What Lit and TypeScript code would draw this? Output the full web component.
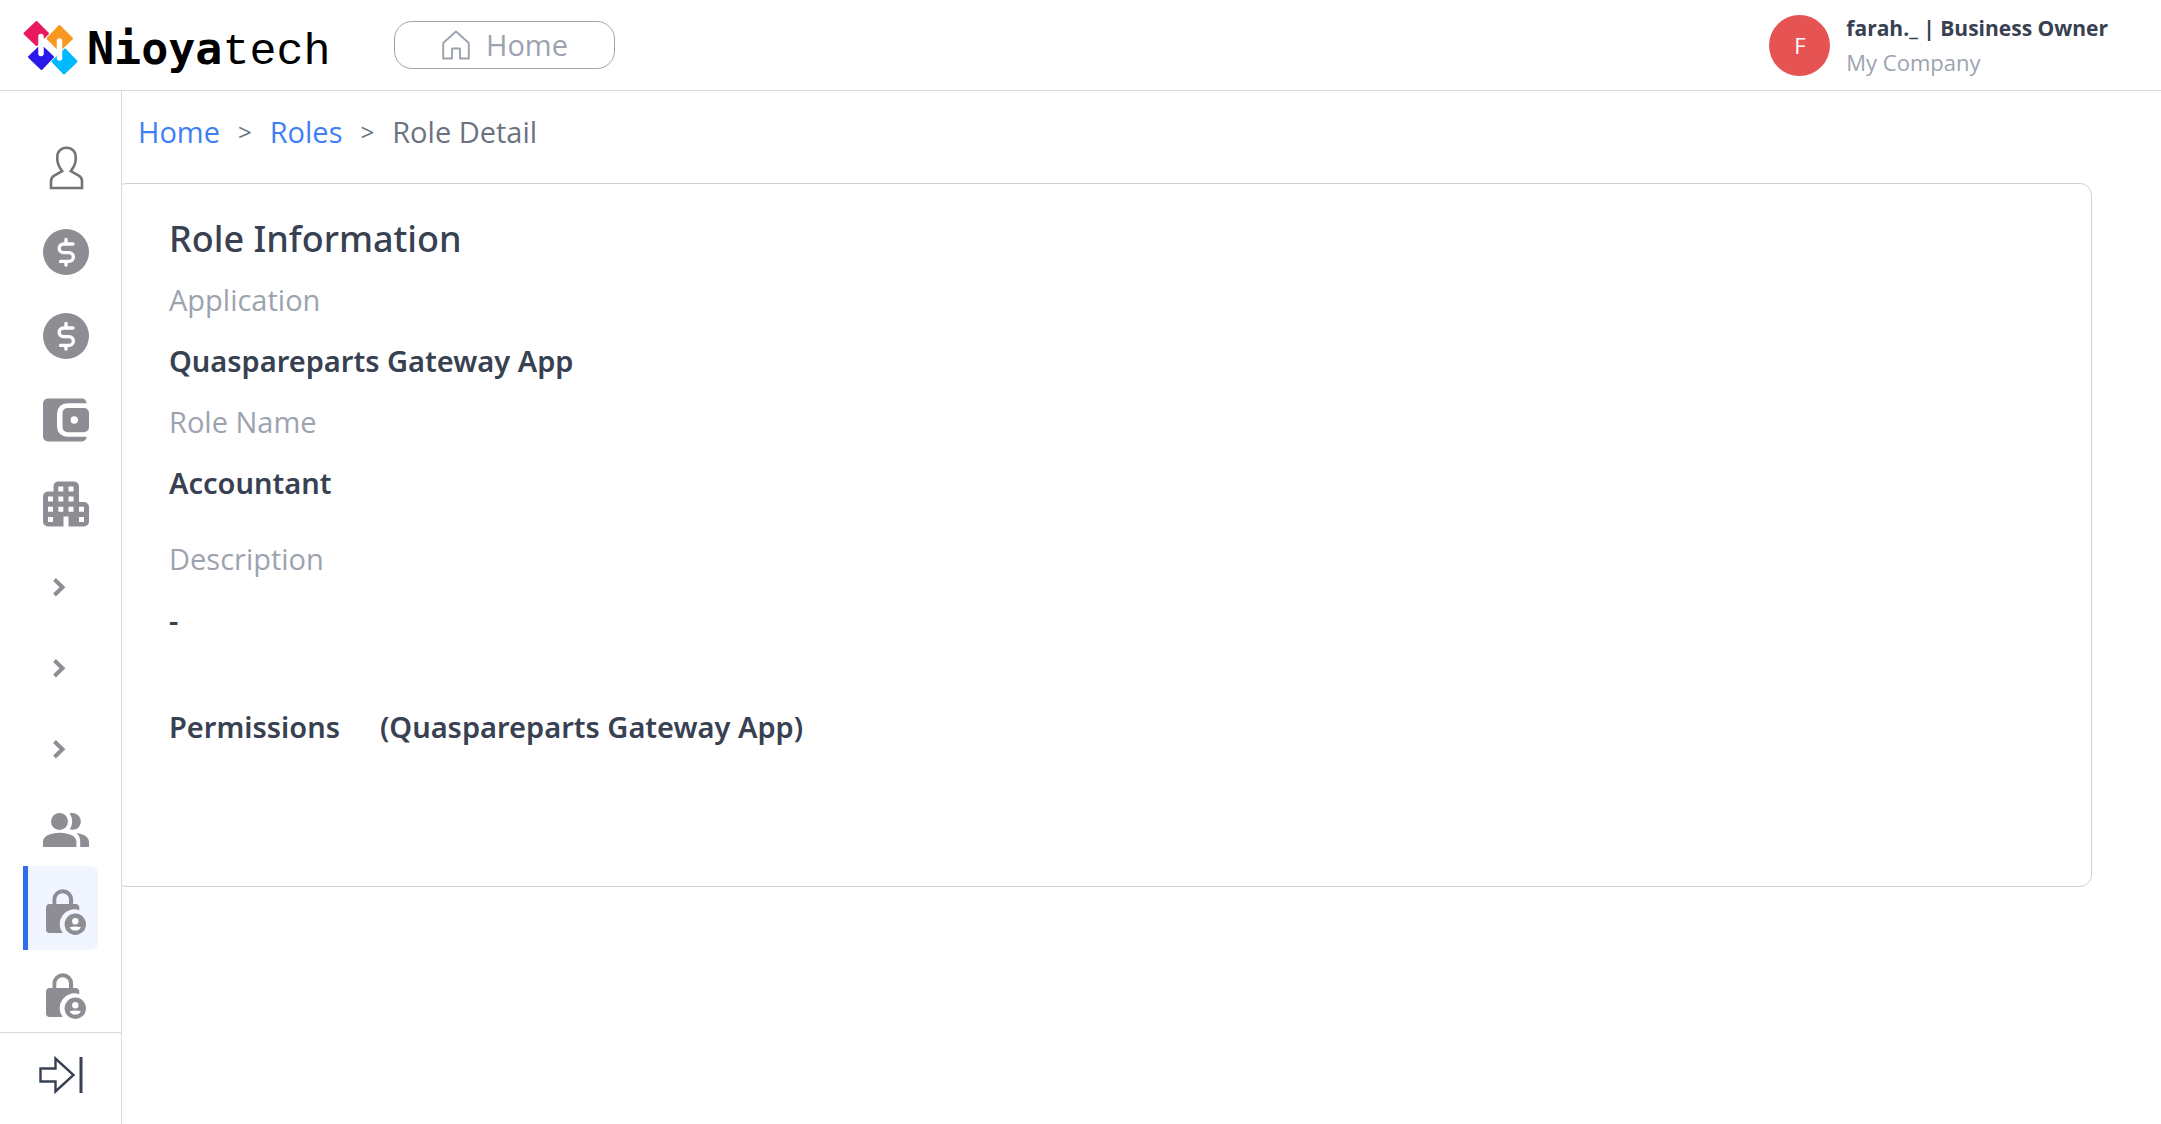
import { LitElement, html, css, svg, TemplateResult } from "lit";
import { customElement } from "lit/decorators.js";
import { classMap } from "lit/directives/class-map.js";

const dollar = svg`
  <circle cx="23" cy="23" r="23"/>
  <path d="M30 15H20.5a4.2 4.2 0 0 0 0 8.6H26a4.4 4.4 0 0 1 0 8.8H17.5M23 10.5V15M23 32.4V36" fill="none" stroke="#fff" stroke-width="3.4" stroke-linecap="round" stroke-linejoin="round"/>`;

const chevron = svg`<path d="M11.5 15.5 19.5 23.2 11.5 31" fill="none" stroke="#8e8d94" stroke-width="4"/>`;

const lock = svg`
  <path fill-rule="evenodd" d="M9.5 15v-4.500a10.200 10.200 0 0 1 20.600 0V15H32.500a3.800 3.800 0 0 1 3.800 3.800V21.200A14.700 14.700 0 0 0 19.700 44H6.800A3.800 3.800 0 0 1 3 40.200V18.800A3.800 3.800 0 0 1 6.800 15ZM13.300 15H26v-4.500a6.350 6.350 0 0 0-12.700 0Z"/>
  <circle cx="32.300" cy="35.300" r="10.700"/>
  <circle cx="32.300" cy="32.200" r="3.200" fill="#fff"/>
  <path d="M26.700 38.200q5.600-1.600 11.200 0-1.600 3.400-5.600 3.400t-5.600-3.400Z" fill="#fff"/>`;

const user = svg`
  <path d="M19.200 26.200C16.500 22.500 14.300 19 14.300 14.500v-2.600C14.300 6.500 18 2.800 23.500 2.800s9.200 3.700 9.200 9.100v2.600c0 4.500-2.200 8-4.900 11.700l7.600 4.200c2.600 1.500 3.600 3 3.600 5.600v7H8v-7c0-2.600 1-4.100 3.600-5.600Z" fill="none" stroke="#737277" stroke-width="2.600"/>`;

const wallet = svg`
  <path d="M43.500 6.200A4.500 4.500 0 0 0 39 1.500H5A5 5 0 0 0 0 6.500v33a5 5 0 0 0 5 5h34a4.500 4.500 0 0 0 4.500-4.700H24a10 10 0 0 1-10-10V16.200a10 10 0 0 1 10-10Z"/>
  <path fill-rule="evenodd" d="M24.500 11H41a5 5 0 0 1 5 5v14.200a5 5 0 0 1-5 5H24.500a5 5 0 0 1-5-5V16a5 5 0 0 1 5-5ZM31.300 19.300a3.700 3.700 0 1 0 .001 7.400 3.700 3.700 0 0 0-.001-7.400Z"/>`;

const building = svg`
  <path fill-rule="evenodd" d="M15 .5h16a5 5 0 0 1 5 5v15.500h5a5 5 0 0 1 5 5v14.500a5 5 0 0 1-5 5H25.500v-10h-5v10H5a5 5 0 0 1-5-5V15.500a5 5 0 0 1 5-5h5.500V5.500a5 5 0 0 1 4.500-5Z
    M15.300 5.500v5h5v-5ZM25.500 5.500v5h5v-5Z
    M5 15.500v5h5v-5ZM15.300 15.500v5h5v-5ZM25.500 15.500v5h5v-5Z
    M5 25.700v5h5v-5ZM15.300 25.700v5h5v-5ZM25.500 25.700v5h5v-5ZM36 25.700v5h5v-5Z
    M5 36v5h5v-5ZM36 36v5h5v-5Z"/>`;

const people = svg`
  <circle cx="16.500" cy="14.500" r="8.500"/>
  <path d="M0 40V34.500c0-5 7-8.800 16.700-8.800s16.700 3.800 16.700 8.800V40Z"/>
  <path d="M26.500 22.300c3.600-4.400 3.600-11.600 0-15.900 6-1.700 11.300 2.300 11.300 8.100s-5.300 9.600-11.300 7.800Z"/>
  <path d="M33.400 26.100C41 27 46 30.500 46 34.800V40H37.200v-5.500c0-3.300-1.200-6.200-3.800-8.400Z"/>`;

interface NavItem {
  label: string;
  icon: TemplateResult<2>;
  compact?: boolean;
  active?: boolean;
}

const NAV: NavItem[] = [
  { label: "Profile", icon: user },
  { label: "Payments", icon: dollar },
  { label: "Payouts", icon: dollar },
  { label: "Wallet", icon: wallet },
  { label: "Company", icon: building },
  { label: "Expand first group", icon: chevron, compact: true },
  { label: "Expand second group", icon: chevron, compact: true },
  { label: "Expand third group", icon: chevron, compact: true },
  { label: "Users", icon: people, compact: true },
  { label: "Roles", icon: lock, active: true },
  { label: "Permissions", icon: lock },
];

@customElement("app-header")
class AppHeader extends LitElement {
  static styles = css`
    :host {
      display: flex;
      align-items: center;
      flex: none;
      height: 90px;
      padding: 0 53px 0 23px;
      border-bottom: 1px solid #d9dadd;
      background: #fff;
    }
    .brand {
      display: flex;
      align-items: center;
      gap: 9px;
      padding-top: 4px;
      color: #000;
      text-decoration: none;
    }
    .mark {
      display: block;
      width: 55px;
      height: 55px;
    }
    .word {
      padding-top: 8px;
      font: 45px/60px "DejaVu Sans Mono", monospace;
      white-space: nowrap;
    }
    .strong {
      font-weight: 700;
    }
    .thin {
      font-family: "Liberation Mono", monospace;
    }
    .home {
      display: flex;
      align-items: center;
      justify-content: center;
      gap: 16px;
      width: 221px;
      height: 48px;
      margin-left: 63px;
      padding: 0 0 0 2px;
      border: 1px solid #9ca3af;
      border-radius: 18px;
      background: #fff;
      color: #9ca3af;
      font: 29px/40px "Open Sans", sans-serif;
      cursor: pointer;
    }
    .home-icon {
      width: 28px;
      height: 30px;
    }
    .account {
      display: flex;
      align-items: center;
      gap: 16px;
      margin-left: auto;
    }
    .avatar {
      display: grid;
      place-items: center;
      width: 61px;
      height: 61px;
      border-radius: 50%;
      background: #e55353;
      color: #fff;
      font-size: 22px;
    }
    .name,
    .company {
      font-size: 22px;
      line-height: 34px;
      white-space: nowrap;
    }
    .name {
      color: #374151;
      font-size: 21px;
      font-weight: 700;
    }
    .company {
      color: #9ca3af;
    }
  `;

  render() {
    return html`
      <a class="brand" href="#home" aria-label="Nioyatech">
        <svg class="mark" viewBox="0 0 55 55" aria-hidden="true">
          <g stroke-linejoin="round" stroke-width="2">
            <path d="M13.500 2 25 13.500 13.500 25 1.500 13.500Z" fill="#e8195c" stroke="#e8195c"/>
            <path d="M36.500 6 49 18.500 36.500 30.500 24.500 18.500Z" fill="#f99820" stroke="#f99820"/>
            <path d="M18 25.500 30 37 18.500 49 6 37Z" fill="#2b19ea" stroke="#2b19ea"/>
            <path d="M42 29.500 53.500 41.500 41 53.500 29.500 41.500Z" fill="#00b9ff" stroke="#00b9ff"/>
          </g>
          <path d="M18 16.500v17M36.500 21v17" stroke="#fff" stroke-width="5.500" stroke-linecap="round"/>
          <path d="M18 18 36.500 35" stroke="#fff" stroke-width="3.500"/>
        </svg>
        <span class="word"><span class="strong">Nioya</span><span class="thin">tech</span></span>
      </a>
      <button class="home" type="button">
        <svg class="home-icon" viewBox="0 0 28 30" aria-hidden="true">
          <path d="M1.200 28.500V13L14 1.500 26.800 13v15.500H18v-10h-8v10Z" fill="none" stroke="#9ca3af" stroke-width="1.900" stroke-linejoin="round"/>
        </svg>
        Home
      </button>
      <div class="account">
        <div class="avatar">F</div>
        <div>
          <div class="name">farah._ | Business Owner</div>
          <div class="company">My Company</div>
        </div>
      </div>
    `;
  }
}

@customElement("app-sidebar")
class AppSidebar extends LitElement {
  static styles = css`
    :host {
      display: flex;
      flex-direction: column;
      flex: none;
      width: 121px;
      border-right: 1px solid #d9dadd;
      background: #fff;
      z-index: 1;
    }
    .list {
      flex: 1;
      min-height: 0;
      margin: 0;
      padding: 31px 23px 0;
      overflow: hidden;
      list-style: none;
    }
    .link {
      display: flex;
      align-items: center;
      box-sizing: border-box;
      height: 84px;
      padding: 8px 0 0 15px;
      border-left: 5px solid transparent;
      border-radius: 0 8px 8px 0;
    }
    .compact {
      height: 81px;
    }
    .active {
      border-left-color: #2f6fed;
      background: #f0f5ff;
    }
    .icon {
      display: block;
      flex: none;
      width: 46px;
      height: 46px;
      fill: #8e8d94;
    }
    .toggle {
      display: grid;
      place-items: center;
      flex: none;
      height: 92px;
      padding: 0 0 8px;
      border: 0;
      border-top: 1px solid #d9dadd;
      background: #fff;
      cursor: pointer;
    }
    .toggle-icon {
      width: 44px;
      height: 38px;
    }
  `;

  render() {
    return html`
      <ul class="list">
        ${NAV.map(
          (item) => html`
            <li>
              <a
                class=${classMap({ link: true, compact: !!item.compact, active: !!item.active })}
                href="#"
                aria-label=${item.label}
              >
                <svg class="icon" viewBox="0 0 46 46" aria-hidden="true">${item.icon}</svg>
              </a>
            </li>
          `,
        )}
      </ul>
      <button class="toggle" type="button" aria-label="Expand sidebar">
        <svg class="toggle-icon" viewBox="0 0 44 38" fill="none" stroke="#374151" stroke-width="2.400" aria-hidden="true">
          <path d="M1.500 12.500H16.500V2.500L34.500 19 16.500 35.500V25.500H1.500Z"/>
          <path d="M42 1V37" stroke-width="3"/>
        </svg>
      </button>
    `;
  }
}

@customElement("role-detail")
class RoleDetail extends LitElement {
  static styles = css`
    :host {
      display: block;
      flex: 1;
      min-width: 0;
      font-size: 29px;
      line-height: 45px;
    }
    .crumbs {
      display: flex;
      gap: 18px;
      padding: 18px 16px 29px;
      color: #6b7280;
    }
    .crumb {
      color: #3f7ff5;
      text-decoration: none;
    }
    .sep {
      font-size: 24px;
    }
    .card {
      margin: 0 69px 0 -8px;
      padding: 32px 54px 137px;
      border: 1px solid #d1d1d3;
      border-radius: 12px;
      color: #374151;
    }
    .title {
      margin: 0 0 16px;
      font-family: "Noto Sans", "Open Sans", sans-serif;
      font-size: 36px;
      font-weight: 500;
      line-height: 45px;
    }
    .fields {
      display: grid;
      gap: 16px;
      margin: 0;
    }
    .label {
      color: #9ca3af;
    }
    .value {
      margin: 0;
      font-family: "Noto Sans", "Open Sans", sans-serif;
      font-weight: 600;
    }
    .spaced {
      margin-top: 15px;
    }
    .permissions {
      display: flex;
      gap: 40px;
      margin: 62px 0 0;
      font-family: "Noto Sans", "Open Sans", sans-serif;
      font-size: 29px;
      font-weight: 600;
      line-height: 45px;
    }
  `;

  render() {
    return html`
      <nav class="crumbs" aria-label="Breadcrumb">
        <a class="crumb" href="#home">Home</a>
        <span class="sep">&gt;</span>
        <a class="crumb" href="#roles">Roles</a>
        <span class="sep">&gt;</span>
        <span>Role Detail</span>
      </nav>
      <section class="card">
        <h1 class="title">Role Information</h1>
        <dl class="fields">
          <dt class="label">Application</dt>
          <dd class="value">Quaspareparts Gateway App</dd>
          <dt class="label">Role Name</dt>
          <dd class="value">Accountant</dd>
          <dt class="label spaced">Description</dt>
          <dd class="value">-</dd>
        </dl>
        <h2 class="permissions">
          <span>Permissions</span>
          <span>(Quaspareparts Gateway App)</span>
        </h2>
      </section>
    `;
  }
}

@customElement("app-root")
class AppRoot extends LitElement {
  static styles = css`
    :host {
      display: flex;
      flex-direction: column;
      height: 100vh;
      background: #fff;
      font-family: "Open Sans", sans-serif;
    }
    .body {
      display: flex;
      flex: 1;
      min-height: 0;
    }
  `;

  render() {
    return html`
      <app-header></app-header>
      <div class="body">
        <app-sidebar></app-sidebar>
        <role-detail></role-detail>
      </div>
    `;
  }
}
